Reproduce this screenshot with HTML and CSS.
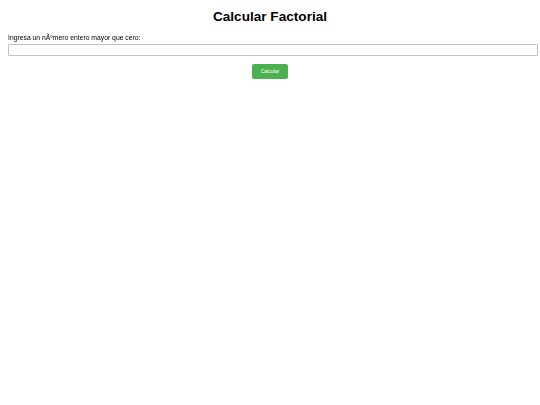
FILE: index.html
```html
<!DOCTYPE html>
<html lang="es">
<head>
<meta charset="utf-8">
<title>Calcular Factorial</title>
<link rel="stylesheet" href="styles.css">
</head>
<body>
<h1 class="title">Calcular Factorial</h1>
<form class="form" onsubmit="return false;">
  <label class="label" for="numero">Ingresa un nÃºmero entero mayor que cero:</label>
  <input class="input" type="text" id="numero">
  <div class="actions">
    <button class="btn" type="button">Calcular</button>
  </div>
</form>
</body>
</html>
```

FILE: styles.css
```css
html, body {
  background: #ffffff;
}
body {
  margin: 0;
  padding: 0 8px;
  font-family: "Liberation Sans", Arial, sans-serif;
  color: #000;
}
.title {
  margin: 0;
  padding-top: 9px;
  font-size: 13.6px;
  line-height: 16px;
  font-weight: bold;
  text-align: center;
}
.form {
  margin: 0;
  padding-top: 9px;
}
.label {
  display: block;
  font-size: 6.8px;
  line-height: 8px;
  will-change: transform;
}
.input {
  display: block;
  margin: 2px 0 0;
  width: 100%;
  height: 8px;
  padding: 1px 2px;
  border: 1px solid #c4c4c4;
  border-radius: 1px;
  font-size: 6.8px;
  font-family: inherit;
  outline: none;
}
.actions {
  display: flex;
  justify-content: center;
  margin-top: 8px;
}
.btn {
  display: block;
  height: 15px;
  padding: 0 8.5px;
  border: none;
  border-radius: 2px;
  background: #4caf50;
  color: #ffffff;
  font-family: "Liberation Sans", Arial, sans-serif;
  font-size: 5.1px;
  line-height: 15px;
  cursor: pointer;
}
```
